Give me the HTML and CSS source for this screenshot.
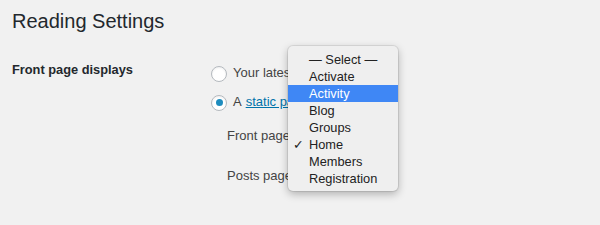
FILE: index.html
```html
<!DOCTYPE html>
<html>
<head>
<meta charset="utf-8">
<title>Reading Settings</title>
<link rel="stylesheet" href="styles.css">
</head>
<body>

<div class="wrap">
    <h1>Reading Settings</h1>

    <div class="form-row">
        <div class="th">Front page displays</div>
        <div class="td">
            <label class="opt"><span class="radio"></span>Your latest posts</label>
            <label class="opt"><span class="radio on"></span>A <a href="#">static page</a> (select below)</label>
            <ul class="pages">
                <li><span class="lbl">Front page:</span><span class="sel">Home</span></li>
                <li><span class="lbl">Posts page:</span><span class="sel">Blog</span></li>
            </ul>
        </div>
    </div>

    <ul class="popup">
        <li>— Select —</li>
        <li>Activate</li>
        <li class="hl">Activity</li>
        <li>Blog</li>
        <li>Groups</li>
        <li class="chk">Home</li>
        <li>Members</li>
        <li>Registration</li>
    </ul>
</div>

</body>
</html>
```

FILE: styles.css
```css
body,h1,ul,li{margin:0;padding:0;}
li{list-style:none;}
body{background:#f1f1f1;color:#444;font:13px/1.4 "Liberation Sans",Arial,sans-serif;}

.wrap{position:relative;padding:0 12px;height:225px;overflow:hidden;}
h1{font-size:20px;font-weight:400;line-height:29px;padding-top:7px;color:#23282d;}

.form-row{display:flex;margin-top:25px;}
.th{width:199px;font-weight:700;font-size:12.8px;color:#23282d;line-height:17px;}
.td{display:flex;flex-direction:column;}
.opt{display:flex;align-items:center;height:17px;margin-top:4px;margin-bottom:8px;color:#444;white-space:nowrap;}
.opt a{color:#0073aa;text-decoration:underline;margin-left:4px;margin-right:4px;}
.radio{width:14px;height:14px;border:1px solid #b4b9be;border-radius:50%;background:#fff;margin-right:6px;display:flex;align-items:center;justify-content:center;box-shadow:inset 0 1px 2px rgba(0,0,0,.07);}
.radio.on::before{content:"";width:7px;height:7px;border-radius:50%;background:#1e8cbe;}

.pages{margin-left:16px;margin-top:3px;}
.pages li{display:flex;align-items:center;height:28px;margin-bottom:12px;white-space:nowrap;}
.lbl{width:73px;}
.sel{box-sizing:border-box;width:94px;height:28px;border:1px solid #ddd;border-radius:3px;background:#fff;padding-left:8px;line-height:26px;color:#32373c;}

.popup{position:absolute;left:288px;top:46px;width:110px;padding:5px 0 4px;background:#efefef;border-radius:5px;box-shadow:0 0 0 1px rgba(0,0,0,.08),0 3px 9px rgba(0,0,0,.28);font-size:12.8px;color:#222;}
.popup li{height:17px;line-height:17px;padding-left:21px;position:relative;}
.popup li.hl{background:#3f87f5;color:#fff;}
.popup li.chk::before{content:"✓";position:absolute;left:5px;top:0;font-weight:700;font-family:"DejaVu Sans",sans-serif;}
```
